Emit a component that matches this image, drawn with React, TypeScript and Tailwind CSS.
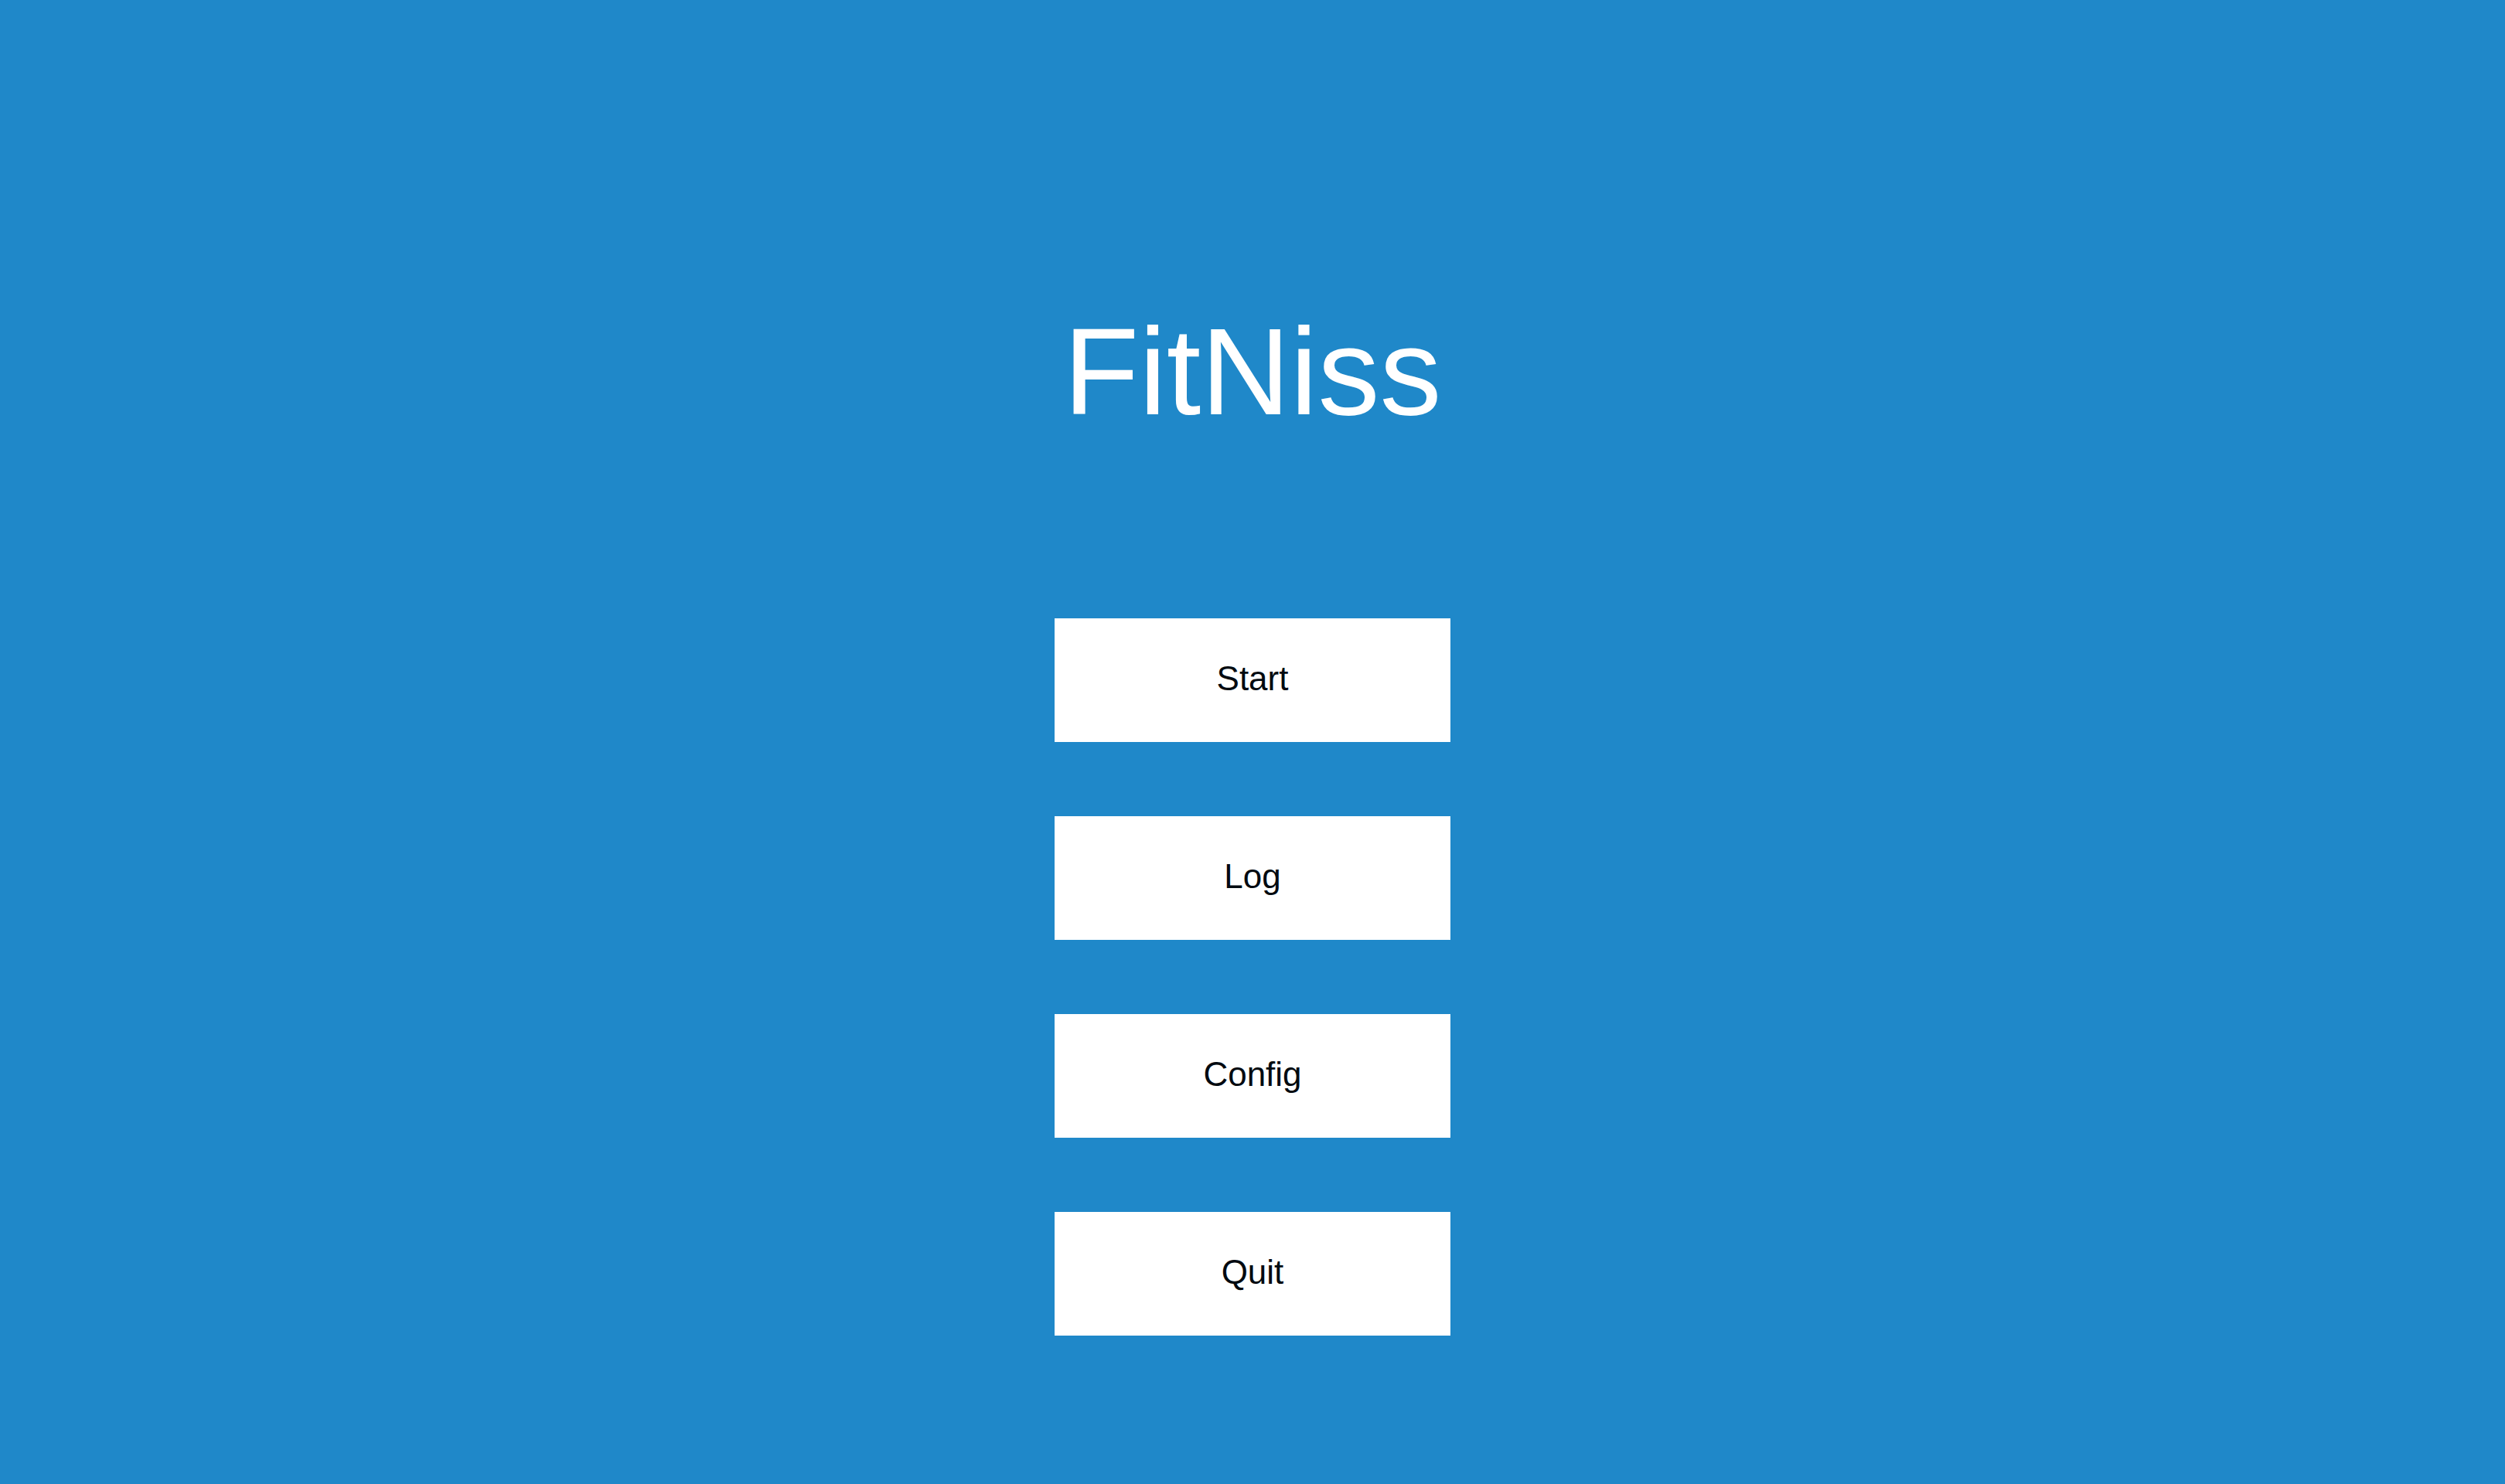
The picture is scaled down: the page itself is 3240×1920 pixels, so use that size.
const menuItems = ['Start', 'Log', 'Config', 'Quit'];

export default function App() {
  return (
    <main className="flex min-h-screen flex-col items-center bg-[#1f88c9] pt-96 font-['Liberation_Sans',Arial,sans-serif]">
      <h1 className="text-[160px] leading-[194px] text-white">FitNiss</h1>
      <nav className="mt-[222px] flex flex-col gap-24">
        {menuItems.map((item) => (
          <button key={item} type="button" className="h-40 w-lg bg-white pb-1 text-[44px] text-[#020a10] hover:bg-gray-100">
            {item}
          </button>
        ))}
      </nav>
    </main>
  );
}
